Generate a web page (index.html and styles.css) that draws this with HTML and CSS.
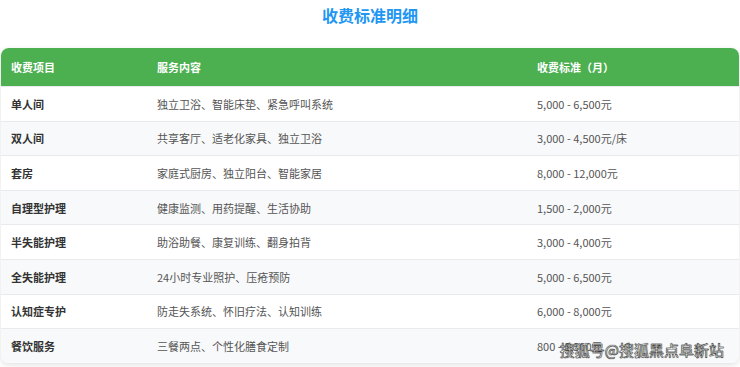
FILE: index.html
```html
<!DOCTYPE html>
<html lang="zh">
<head>
<meta charset="utf-8">
<title>收费标准明细</title>
<link rel="stylesheet" href="styles.css">
</head>
<body>
<div class="page">
  <h2 class="title">收费标准明细</h2>
  <div class="card">
    <table class="fees">
      <colgroup>
        <col class="c1"><col class="c2"><col class="c3">
      </colgroup>
      <thead>
        <tr><th>收费项目</th><th>服务内容</th><th>收费标准（月）</th></tr>
      </thead>
      <tbody>
        <tr><td class="item">单人间</td><td>独立卫浴、智能床垫、紧急呼叫系统</td><td>5,000 - 6,500元</td></tr>
        <tr><td class="item">双人间</td><td>共享客厅、适老化家具、独立卫浴</td><td>3,000 - 4,500元/床</td></tr>
        <tr><td class="item">套房</td><td>家庭式厨房、独立阳台、智能家居</td><td>8,000 - 12,000元</td></tr>
        <tr><td class="item">自理型护理</td><td>健康监测、用药提醒、生活协助</td><td>1,500 - 2,000元</td></tr>
        <tr><td class="item">半失能护理</td><td>助浴助餐、康复训练、翻身拍背</td><td>3,000 - 4,000元</td></tr>
        <tr><td class="item">全失能护理</td><td>24小时专业照护、压疮预防</td><td>5,000 - 6,500元</td></tr>
        <tr><td class="item">认知症专护</td><td>防走失系统、怀旧疗法、认知训练</td><td>6,000 - 8,000元</td></tr>
        <tr><td class="item">餐饮服务</td><td>三餐两点、个性化膳食定制</td><td>800 - 1,500元</td></tr>
      </tbody>
    </table>
  </div>
  <div class="watermark">搜狐号@搜狐黑点阜新站</div>
</div>
</body>
</html>
```
FILE: styles.css
```css
html, body {
  margin: 0;
  padding: 0;
  background: #fff;
}
body {
  font-family: "Noto Sans CJK SC", "Noto Sans", sans-serif;
  overflow: hidden;
}
.page {
  position: relative;
  height: 367px;
  padding: 0 1px;
}
.title {
  margin: 0;
  padding-top: 4px;
  height: 48px;
  box-sizing: border-box;
  text-align: center;
  font-size: 16px;
  line-height: 22px;
  font-weight: 700;
  color: #2196f3;
}
.card {
  border-radius: 8px;
  overflow: hidden;
  box-shadow: 0 2px 6px rgba(0, 0, 0, 0.12);
  background: #fff;
}
.fees {
  width: 100%;
  border-collapse: collapse;
  table-layout: fixed;
  font-size: 11px;
}
.c1 { width: 146px; }
.c2 { width: 380px; }
.fees th {
  background: #4caf50;
  color: #fff;
  font-weight: 700;
  text-align: left;
  height: 38px;
  padding: 0 10px;
}
.fees td {
  height: 34.6px;
  padding: 0 10px;
  color: #555;
  border-top: 1px solid #e8eaed;
  box-sizing: border-box;
}
.fees tbody tr:nth-child(even) td {
  background: #f8f9fa;
}
.fees td.item {
  color: #333;
  font-weight: 700;
}
.watermark {
  position: absolute;
  right: 16px;
  bottom: 8px;
  font-size: 15px;
  line-height: 18px;
  color: #fff;
  font-weight: 400;
  -webkit-text-stroke: 0.4px #222;
  text-shadow: 0 0 1px #000;
}
```
